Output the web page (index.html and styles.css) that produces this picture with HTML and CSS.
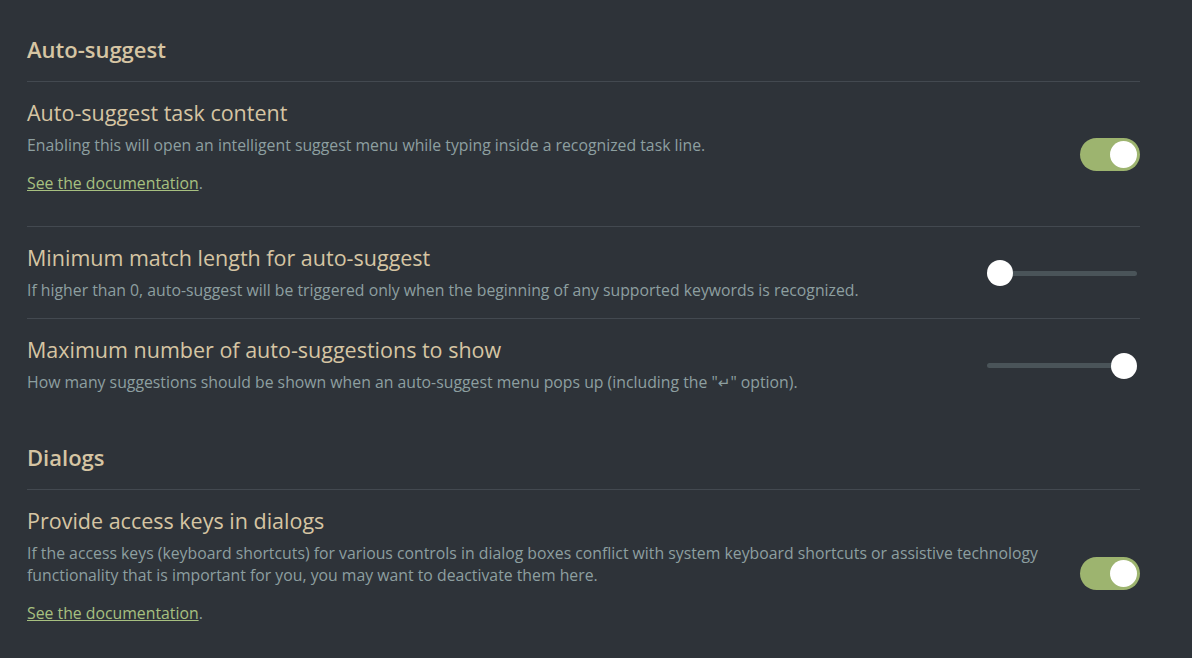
FILE: index.html
```html
<!DOCTYPE html>
<html lang="en">
<head>
<meta charset="utf-8">
<title>Settings</title>
<link rel="stylesheet" href="styles.css">
</head>
<body>
<div class="settings">
  <h3 class="section-heading">Auto-suggest</h3>
  <div class="setting-item first">
    <div class="setting-info">
      <div class="setting-name">Auto-suggest task content</div>
      <div class="setting-desc">Enabling this will open an intelligent suggest menu while typing inside a recognized task line.</div>
      <p class="setting-link"><a href="#">See the documentation</a>.</p>
    </div>
    <div class="setting-control">
      <div class="toggle is-on"><span class="knob"></span></div>
    </div>
  </div>
  <div class="setting-item">
    <div class="setting-info">
      <div class="setting-name">Minimum match length for auto-suggest</div>
      <div class="setting-desc">If higher than 0, auto-suggest will be triggered only when the beginning of any supported keywords is recognized.</div>
    </div>
    <div class="setting-control">
      <input class="slider" type="range" min="0" max="3" value="0">
    </div>
  </div>
  <div class="setting-item">
    <div class="setting-info">
      <div class="setting-name">Maximum number of auto-suggestions to show</div>
      <div class="setting-desc">How many suggestions should be shown when an auto-suggest menu pops up (including the "<span class="glyph">↵</span>" option).</div>
    </div>
    <div class="setting-control">
      <input class="slider" type="range" min="3" max="20" value="20">
    </div>
  </div>

  <h3 class="section-heading">Dialogs</h3>
  <div class="setting-item first">
    <div class="setting-info">
      <div class="setting-name">Provide access keys in dialogs</div>
      <div class="setting-desc">If the access keys (keyboard shortcuts) for various controls in dialog boxes conflict with system keyboard shortcuts or assistive technology functionality that is important for you, you may want to deactivate them here.</div>
      <p class="setting-link"><a href="#">See the documentation</a>.</p>
    </div>
    <div class="setting-control">
      <div class="toggle is-on"><span class="knob"></span></div>
    </div>
  </div>
</div>
</body>
</html>
```
FILE: styles.css
```css
html, body {
  margin: 0;
  padding: 0;
  background: #2e3339;
  height: 100%;
  overflow: hidden;
}
body {
  font-family: "Open Sans", "Noto Sans", sans-serif;
  color: #d6c5a3;
}
.settings {
  padding: 3px 52px 0 27px;
}
.section-heading {
  margin: 0;
  padding: 33px 0 19px;
  font-size: 22px;
  line-height: 26px;
  font-weight: 600;
  color: #d6c5a3;
  border-bottom: 1px solid #434950;
}
.setting-item {
  display: flex;
  align-items: center;
  gap: 40px;
  padding: 18px 0 17px;
  border-top: 1px solid #434950;
}
.setting-item.first {
  border-top: none;
  padding-bottom: 18px;
}
.setting-info {
  flex: 1;
  min-width: 0;
}
.setting-name {
  font-size: 21.5px;
  line-height: 26px;
  color: #d6c5a3;
}
.setting-desc {
  margin-top: 8px;
  font-size: 15.8px;
  line-height: 22px;
  color: #8d9fa0;
}
.glyph {
  font-family: "DejaVu Sans", sans-serif;
  font-size: 15px;
}
.setting-link {
  margin: 16px 0 14px;
  font-size: 15.8px;
  line-height: 22px;
  color: #8d9fa0;
}
.setting-link a {
  color: #a7c080;
  text-decoration: underline;
}
.setting-control {
  flex: none;
  display: flex;
  justify-content: flex-end;
}
.toggle {
  position: relative;
  width: 60px;
  height: 33px;
  border-radius: 17px;
  background: #9db46f;
}
.toggle .knob {
  position: absolute;
  top: 3px;
  right: 3px;
  width: 27px;
  height: 27px;
  border-radius: 50%;
  background: #ffffff;
}
.slider {
  -webkit-appearance: none;
  appearance: none;
  width: 150px;
  height: 26px;
  margin: 0 3px 0 0;
  background: transparent;
}
.slider::-webkit-slider-runnable-track {
  height: 5px;
  border-radius: 3px;
  background: #4a5459;
}
.slider::-webkit-slider-thumb {
  -webkit-appearance: none;
  appearance: none;
  width: 26px;
  height: 26px;
  margin-top: -10.5px;
  border-radius: 50%;
  background: #ffffff;
  border: none;
}
```
